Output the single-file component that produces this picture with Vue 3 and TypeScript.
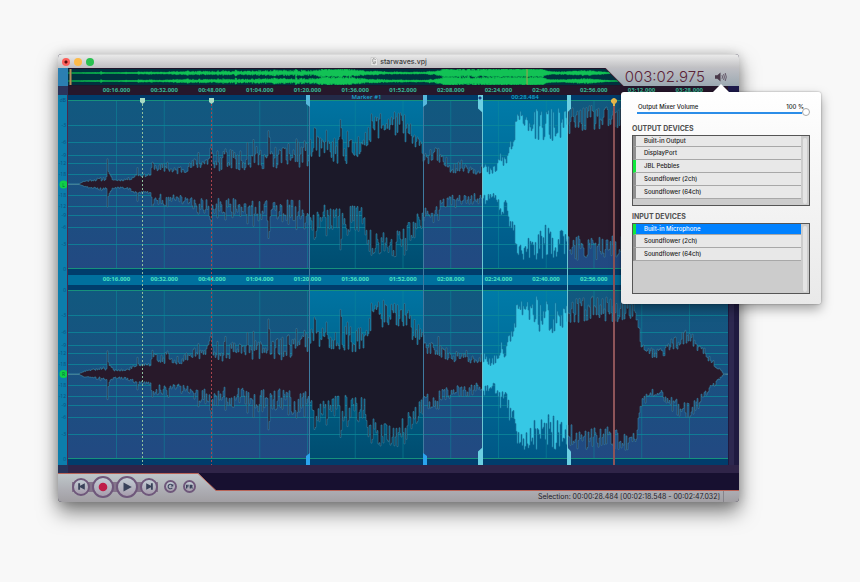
<script setup lang="ts">
import { ref } from 'vue'

type Point = [number, number, number]

const DURATION_WIDTH = 660
const CENTER = 84

/* Amplitude envelope: position, quiet level, peak level */
const envelope: Point[] = [
  [10, 0, 0], [15, 2, 3], [24, 3, 5], [34, 3, 7], [38, 4, 8], [39, 12, 15], [42, 6, 9], [45, 3, 5],
  [53, 3, 5], [62, 4, 7], [69, 8, 11], [74, 7, 10], [82, 8, 11], [84, 16, 22], [92, 10, 20],
  [100, 11, 24], [104, 9, 16], [112, 10, 20], [122, 13, 22], [130, 15, 31], [137, 14, 30],
  [143, 20, 38], [148, 12, 24], [157, 13, 36], [164, 14, 34], [175, 14, 33], [188, 15, 38],
  [207, 15, 38], [214, 14, 36], [227, 16, 42], [240, 17, 42], [244, 24, 48], [260, 20, 48],
  [280, 20, 48], [296, 24, 48], [301, 42, 70], [312, 46, 74], [322, 50, 74], [335, 44, 72],
  [344, 34, 58], [352, 25, 48], [358, 20, 36], [366, 20, 40], [372, 16, 30], [384, 11, 24],
  [400, 11, 24], [408, 9, 18], [414, 12, 24], [422, 8, 16], [427, 10, 20], [432, 18, 34],
  [438, 16, 28], [441, 28, 48], [445, 32, 50], [448, 54, 70], [455, 60, 76], [466, 44, 74],
  [480, 40, 77], [492, 44, 76], [500, 50, 76], [512, 52, 77], [524, 54, 79], [540, 52, 77],
  [555, 52, 77], [567, 58, 76], [569, 45, 60], [573, 26, 38], [579, 17, 26], [587, 14, 26],
  [594, 15, 27], [602, 21, 36], [612, 26, 44], [622, 29, 50], [632, 20, 34], [642, 11, 18],
  [650, 4, 7], [655, 0, 1], [660, 0, 0],
]

const peaks: Record<number, number> = {
  39: 26, 69: 18, 84: 24, 99: 24, 130: 33, 142: 38, 143: 42, 149: 34, 157: 38, 164: 34, 179: 42, 185: 45,
  200: 56, 201: 48, 214: 38, 220: 42, 228: 47, 236: 46, 246: 58, 247: 56, 258: 54, 266: 36,
  272: 66, 273: 58, 279: 54, 290: 48, 297: 42, 303: 72, 304: 66, 326: 73, 336: 72, 370: 38, 449: 72,
  468: 78, 479: 72,
}

const overviewPeakScale = 0.055

function levelAt(x: number): [number, number] {
  for (let i = 1; i < envelope.length; i++) {
    const a = envelope[i - 1]
    const b = envelope[i]
    if (x <= b[0]) {
      const t = Math.max(0, (x - a[0]) / (b[0] - a[0]))
      return [a[1] + (b[1] - a[1]) * t, a[2] + (b[2] - a[2]) * t]
    }
  }
  return [0, 0]
}

function createNoise(seed: number) {
  let state = seed
  return () => {
    state = (state * 1664525 + 1013904223) % 4294967296
    return state / 4294967296
  }
}

function halfWave(seed: number): number[] {
  const noise = createNoise(seed)
  const values: number[] = []
  for (let x = 0; x < DURATION_WIDTH; x++) {
    const [low, high] = levelAt(x)
    const value = low + (high - low) * Math.pow(noise(), 1.1)
    values.push(x in peaks ? Math.max(value, peaks[x] - noise() * 3) : value)
  }
  return values
}

function wavePath(upper: number[], lower: number[], center: number, sx = 1, sy = 1): string {
  let d = `M0 ${center}`
  upper.forEach((v, x) => {
    const y = (center - v * sy).toFixed(1)
    d += `L${(x * sx).toFixed(1)} ${y}H${((x + 1) * sx).toFixed(1)}`
  })
  for (let x = lower.length - 1; x >= 0; x--) {
    const y = (center + lower[x] * sy).toFixed(1)
    d += `L${((x + 1) * sx).toFixed(1)} ${y}H${(x * sx).toFixed(1)}`
  }
  return d + 'Z'
}

const halves = [halfWave(11), halfWave(57), halfWave(203), halfWave(419)]
const channels = [
  { id: 'left', path: wavePath(halves[0], halves[1], CENTER) },
  { id: 'right', path: wavePath(halves[2], halves[3], CENTER) },
]
const overviewPaths = [
  wavePath(halves[0], halves[1], 5, 0.835, overviewPeakScale),
  wavePath(halves[2], halves[3], 13, 0.835, overviewPeakScale),
]

const levelLines = [25, 42, 55, 63, 74, 95, 106, 115, 127, 144]
const gridLines = Array.from({ length: 13 }, (_, i) => 48.5 + i * 47.75)

const pad = (n: number) => String(n).padStart(2, '0')
const timeLabels = Array.from({ length: 13 }, (_, i) => {
  const s = (i + 1) * 16
  return `${pad(Math.floor(s / 60))}:${pad(s % 60)}.000`
})

const scaleTexts = ['-3', '-6', '-9', '-12', '-18', '-18', '-12', '-9', '-6', '-3']
const scaleMarks = [5, 195].flatMap((top, c) => [
  { y: top, text: c === 0 ? 'dB' : '0' },
  ...levelLines.map((y, i) => ({ y: top + y, text: scaleTexts[i] })),
  { y: top + 169, text: '0' },
])

const percent = (n: number) => `${(n / DURATION_WIDTH) * 100}%`

const volume = ref(100)
const outputs = ['Built-in Output', 'DisplayPort', 'JBL Pebbles', 'Soundflower (2ch)', 'Soundflower (64ch)']
const inputs = ['Built-in Microphone', 'Soundflower (2ch)', 'Soundflower (64ch)']
const activeOutput = ref('JBL Pebbles')
const activeInput = ref('Built-in Microphone')
</script>

<template>
  <main class="desktop">
    <section class="window">
      <header class="titlebar">
        <div class="lights">
          <button class="light close" aria-label="Close"></button>
          <button class="light minimize" aria-label="Minimize"></button>
          <button class="light maximize" aria-label="Zoom"></button>
        </div>
        <h1 class="title">
          <svg class="doc" viewBox="0 0 8 9" aria-hidden="true">
            <path d="M1 .5H5.5L7.5 2.5V8.5H1Z" fill="#e9e9e9" stroke="#bbb" stroke-width=".5" />
            <path d="M5.7 3Q3-.2 2.7 3.3T5.4 4.5Q6 8 2.5 6.2" fill="none" stroke="#999" />
          </svg>
          <span>starwaves.vpj</span>
        </h1>
      </header>

      <div class="top">
        <div class="corner"></div>
        <div class="overview">
          <svg viewBox="0 0 554 18" preserveAspectRatio="none" aria-hidden="true">
            <path d="M4 5H554M4 13H554" stroke="#0a9f48" />
            <path v-for="d in overviewPaths" :key="d" :d="d" fill="#12c255" stroke="#12c255" stroke-width=".5" />
            <path d="M0 .5H554M0 17.5H554" stroke="#21142a" />
            <path d="M2.5 1V17" stroke="#b98b55" stroke-width="2" />
            <path d="M458.5 1V17" stroke="#a9a04a" />
          </svg>
        </div>
        <div class="clock">
          <time class="time">003:02.975</time>
          <button class="speaker" aria-label="Audio devices">
            <svg viewBox="0 0 12 10" aria-hidden="true">
              <path d="M0 3.2H2.3L5.5.5V9.5L2.3 6.8H0Z" fill="#4a3a4a" />
              <path d="M7 3.2Q8 5 7 6.8M8.6 2Q10.2 5 8.6 8M10.2 1Q12.4 5 10.2 9" fill="none" stroke="#5c4e60" stroke-width=".9" />
            </svg>
          </button>
        </div>
      </div>

      <div class="ruler-row">
        <div class="ruler-corner"></div>
        <div class="ruler dark"><span v-for="t in timeLabels" :key="t">{{ t }}</span></div>
        <div class="ruler-end"></div>
      </div>

      <div class="editor">
        <svg class="scale" viewBox="0 0 10 370" preserveAspectRatio="none" aria-label="Level scale">
          <text v-for="(m, i) in scaleMarks" :key="i" x="8" :y="m.y + 2" text-anchor="end">{{ m.text }}</text>
          <circle cx="5.5" cy="89.5" r="4" fill="#10cf48" />
          <circle cx="5.5" cy="279" r="4" fill="#10cf48" />
          <text class="channel-name" x="5.5" y="91.5" text-anchor="middle">L</text>
          <text class="channel-name" x="5.5" y="281" text-anchor="middle">R</text>
          <path d="M9.5 0V370" stroke="#4a2a4c" />
        </svg>

        <div class="tracks">
          <template v-for="(ch, n) in channels" :key="ch.id">
            <div v-if="n === 1" class="ruler blue"><span v-for="t in timeLabels" :key="t">{{ t }}</span></div>
            <svg :class="['channel', ch.id]" viewBox="0 0 660 169" preserveAspectRatio="none" aria-hidden="true">
              <defs>
                <linearGradient :id="`bg-${ch.id}`" x1="0" y1="0" x2="0" y2="1">
                  <stop offset="0" stop-color="#11597f" /><stop offset="1" stop-color="#224982" />
                </linearGradient>
                <linearGradient :id="`marker-${ch.id}`" x1="0" y1="0" x2="0" y2="1">
                  <stop offset="0" stop-color="#0074a2" /><stop offset="1" stop-color="#004d70" />
                </linearGradient>
                <linearGradient :id="`select-${ch.id}`" x1="0" y1="0" x2="0" y2="1">
                  <stop offset="0" stop-color="#007ba8" /><stop offset="1" stop-color="#005886" />
                </linearGradient>
                <linearGradient :id="`fill-${ch.id}`" gradientUnits="userSpaceOnUse" x1="0" y1="0" x2="660" y2="0">
                  <stop offset="0" stop-color="#28192a" /><stop offset=".3644" stop-color="#28192a" />
                  <stop offset=".3644" stop-color="#1b1929" /><stop offset=".5394" stop-color="#1b1929" />
                  <stop offset=".5394" stop-color="#28192a" /><stop offset=".6288" stop-color="#28192a" />
                  <stop offset=".6288" stop-color="#36c8e5" /><stop offset=".7576" stop-color="#36c8e5" />
                  <stop offset=".7576" stop-color="#28192a" /><stop offset="1" stop-color="#28192a" />
                </linearGradient>
                <linearGradient :id="`edge-${ch.id}`" gradientUnits="userSpaceOnUse" x1="0" y1="0" x2="660" y2="0">
                  <stop offset="0" stop-color="#36809f" /><stop offset=".6288" stop-color="#36809f" />
                  <stop offset=".6288" stop-color="#1c7299" /><stop offset=".7576" stop-color="#1c7299" />
                  <stop offset=".7576" stop-color="#36809f" /><stop offset="1" stop-color="#36809f" />
                </linearGradient>
              </defs>
              <rect width="660" height="169" :fill="`url(#bg-${ch.id})`" />
              <rect x="241" width="115" height="169" :fill="`url(#marker-${ch.id})`" />
              <rect x="415" width="85" height="169" :fill="`url(#select-${ch.id})`" />
              <path v-for="y in levelLines" :key="y" :d="`M0 ${y + 0.5}H660`" stroke="#0c8b9b" stroke-opacity=".75" />
              <path v-for="x in gridLines" :key="x" :d="`M${x} 0V169`" stroke="#0c8b9b" stroke-opacity=".5" />
              <path d="M0 .5H660M0 168.5H660" stroke="#17917c" />
              <path d="M0 84.5H660" stroke="#4b7f8e" />
              <path :d="ch.path" :fill="`url(#fill-${ch.id})`" :stroke="`url(#edge-${ch.id})`" stroke-width=".6" />
            </svg>
          </template>

          <div class="region marker" :style="{ left: percent(241), width: percent(115) }">
            <span class="caption">Marker #1</span>
            <i class="handle top start"></i><i class="handle top end"></i>
            <i class="handle bottom start"></i><i class="handle bottom end"></i>
          </div>
          <div class="region selection" :style="{ left: percent(414), width: percent(86) }">
            <span class="caption">00:28.484</span>
            <i class="handle top start"></i><i class="handle top end"></i>
            <i class="handle bottom start"></i><i class="handle bottom end"></i>
          </div>
          <div class="flag cream" :style="{ left: percent(74) }">
            <svg viewBox="0 0 5 6" aria-hidden="true"><path d="M0 0H5V4L2.5 6L0 4Z" fill="#a9dcc4" /></svg>
          </div>
          <div class="flag red" :style="{ left: percent(143) }">
            <svg viewBox="0 0 5 6" aria-hidden="true"><path d="M0 0H5V4L2.5 6L0 4Z" fill="#a9dcc4" /></svg>
          </div>
          <div class="playhead" :style="{ left: percent(545) }">
            <svg viewBox="0 0 6 8" aria-hidden="true">
              <path d="M1 1Q3-1 5 1L6 2V4L4 6V8H2V6L0 4V2Z" fill="#e9bb4c" />
            </svg>
          </div>
        </div>
        <div class="scrollbar"></div>
      </div>

      <div class="hscroll"></div>

      <footer class="footer">
        <svg class="panel" viewBox="0 0 681 29" preserveAspectRatio="none" aria-hidden="true">
          <defs>
            <linearGradient id="panel-fill" x1="0" y1="0" x2="0" y2="1">
              <stop offset="0" stop-color="#bfc8cb" /><stop offset=".6" stop-color="#adadb3" /><stop offset="1" stop-color="#a19fa3" />
            </linearGradient>
          </defs>
          <path d="M0 0H140L158 17.5H681V29H0Z" fill="url(#panel-fill)" />
          <path d="M0 .5H140L158 17.5H681" fill="none" stroke="#b96457" />
        </svg>
        <div class="transport">
          <div class="main-buttons">
            <button class="round small" aria-label="Go to start">
              <svg viewBox="0 0 10 10"><path d="M2 2H3.7V4.4L8 2V8L3.7 5.6V8H2Z" /></svg>
            </button>
            <button class="round large" aria-label="Record">
              <svg viewBox="0 0 10 10"><circle cx="5" cy="5" r="4.3" fill="#bf1e48" /></svg>
            </button>
            <button class="round large" aria-label="Play">
              <svg viewBox="0 0 10 10"><path d="M1.5 .5L9.8 5L1.5 9.5Z" /></svg>
            </button>
            <button class="round small" aria-label="Go to end">
              <svg viewBox="0 0 10 10"><path d="M8 2H6.3V4.4L2 2V8L6.3 5.6V8H8Z" /></svg>
            </button>
          </div>
          <button class="round tiny" aria-label="Loop">
            <svg viewBox="0 0 10 10"><path d="M7.6 6.7A3.2 3.2 0 1 1 7.3 3" fill="none" stroke="#3d4760" stroke-width="1.6" /><path d="M9 1V5H5Z" /></svg>
          </button>
          <button class="round tiny" aria-label="Follow">
            <svg viewBox="0 0 10 10"><path d="M0 2.5H4V4H1.8V4.7H3.6V6H1.8V7.8H0ZM5.2 2.5H8.2Q9.8 2.8 9.6 4.2L8.8 5.4L10 7.8H8.2L7.3 6V7.8H5.2Z" /></svg>
          </button>
        </div>
        <div class="status">
          <output>Selection: 00:00:28.484 [00:02:18.548 - 00:02:47.032]</output>
        </div>
      </footer>
    </section>

    <aside class="popover">
      <div class="volume">
        <div class="volume-text">
          <label for="volume">Output Mixer Volume</label>
          <output for="volume">{{ volume }} %</output>
        </div>
        <input id="volume" v-model="volume" type="range" min="0" max="100" />
      </div>
      <h2>OUTPUT DEVICES</h2>
      <ul class="devices">
        <li v-for="d in outputs" :key="d" :class="{ active: d === activeOutput }">
          <button @click="activeOutput = d">{{ d }}</button>
        </li>
      </ul>
      <h2>INPUT DEVICES</h2>
      <ul class="devices">
        <li v-for="d in inputs" :key="d" :class="{ active: d === activeInput, selected: d === activeInput }">
          <button @click="activeInput = d">{{ d }}</button>
        </li>
      </ul>
    </aside>
  </main>
</template>

<style>
body {
  background: #f8f8f8;
}
</style>

<style scoped>
* {
  box-sizing: border-box;
}
.desktop {
  position: relative;
  padding: 54px 121px 80px 58px;
  font-family: Inter, "Liberation Sans", sans-serif;
}
button {
  border: 0;
  padding: 0;
  margin: 0;
  background: none;
  font: inherit;
}
svg {
  display: block;
}
.window {
  border-radius: 4px;
  overflow: hidden;
  background: #171030;
  box-shadow: 0 10px 20px rgba(0, 0, 0, 0.5), 0 0 12px rgba(0, 0, 0, 0.18);
}
.titlebar {
  display: grid;
  grid-template-columns: 1fr auto 1fr;
  align-items: center;
  height: 14px;
  padding: 0 4px;
  border-top: 1px solid #dadada;
  background: linear-gradient(#e9e9e9, #bfbfc2);
}
.lights {
  display: flex;
  gap: 4px;
}
.light {
  width: 8px;
  height: 8px;
  border-radius: 50%;
}
.close {
  background: radial-gradient(circle, #5a0b0b 0 1px, #fc5f5a 2px);
}
.minimize {
  background: #fcbb4a;
}
.maximize {
  background: #28c150;
}
.title {
  display: flex;
  align-items: center;
  gap: 2px;
  margin: 0;
  font-size: 7px;
  line-height: 10px;
  font-weight: 500;
  color: #3d3d3d;
}
.doc {
  width: 8px;
  height: 9px;
}
.top {
  display: flex;
  height: 18px;
}
.corner {
  flex: 0 0 10px;
  background: #2b7fb1;
}
.overview {
  flex: 1;
  min-width: 0;
  background: #00323f;
}
.overview svg {
  width: 100%;
  height: 18px;
}
.clock {
  position: relative;
  flex: none;
  display: flex;
  align-items: center;
  gap: 10px;
  margin-left: -18px;
  padding: 0 12px 0 20px;
  background: #4d2436;
  clip-path: polygon(0 0, 100% 0, 100% 100%, 18px 100%);
}
.clock::before {
  content: "";
  position: absolute;
  inset: 0 0 0 1px;
  background: linear-gradient(#bfbfc4, #9ca9b2);
  clip-path: polygon(0 0, 100% 0, 100% 100%, 18px 100%);
}
.time {
  position: relative;
  font-size: 15px;
  font-weight: 300;
  line-height: 18px;
  color: #5b2337;
}
.speaker {
  position: relative;
}
.speaker svg {
  width: 12px;
  height: 10px;
}
.ruler-row {
  display: grid;
  grid-template-columns: 10px 1fr 11px;
  height: 9px;
}
.ruler-corner {
  background: #2b345c;
}
.ruler-end {
  background: #1d1a4c;
}
.ruler {
  display: grid;
  grid-template-columns: repeat(13, 7.515%);
  padding-left: 3.73%;
  font-family: "Open Sans", sans-serif;
  font-size: 6px;
  font-weight: 700;
  line-height: 9px;
  text-align: center;
}
.dark {
  background: #26172b;
  color: #36b795;
}
.blue {
  height: 10px;
  margin: 6px 0 5px;
  background: #00709e;
  color: #4be0c0;
}
.editor {
  display: grid;
  grid-template-columns: 10px 1fr 11px;
}
.scale {
  width: 10px;
  height: 370px;
  background: #0c7eac;
  font-family: "Open Sans", sans-serif;
  font-size: 5px;
  fill: #0a4f7c;
}
.channel-name {
  fill: #056a3a;
}
.tracks {
  position: relative;
  min-width: 0;
  padding: 5px 0 6px;
  background: #003d6c;
}
.channel {
  width: 100%;
  height: 169px;
}
.scrollbar {
  border: solid #1f1a40;
  border-width: 0 5px 0 1px;
  background: #2d2850;
}
.hscroll {
  height: 8px;
  border-left: 10px solid #27335a;
  background: #2f2448;
}
.region {
  position: absolute;
  top: 0;
  bottom: 0;
  border: solid #3f7a9f;
  border-width: 0 1px;
  text-align: center;
}
.selection {
  border-color: #6ec6d2;
}
.caption {
  display: block;
  height: 5px;
  background: #232a48;
  font-family: "Open Sans", sans-serif;
  font-size: 6px;
  font-weight: 600;
  line-height: 5px;
  color: #19a5cf;
}
.selection .caption {
  background: #003358;
}
.handle {
  position: absolute;
  width: 4px;
  height: 12px;
  background: #56b8dc;
}
.top.handle {
  top: 0;
  height: 12px;
}
.bottom.handle {
  bottom: 0;
  background: #2ba4ee;
}
.start {
  right: 100%;
}
.end {
  left: 100%;
}
.top.start {
  clip-path: polygon(0 0, 100% 0, 100% 100%, 0 75%);
}
.top.end {
  clip-path: polygon(0 0, 100% 0, 100% 75%, 0 100%);
}
.bottom.start {
  clip-path: polygon(0 25%, 100% 0, 100% 100%, 0 100%);
}
.bottom.end {
  clip-path: polygon(0 0, 100% 25%, 100% 100%, 0 100%);
}
.selection .handle {
  height: 18px;
  background: #6bd0e2;
}
.selection .start {
  width: 5px;
}
.selection .top.start {
  background: radial-gradient(circle at 2px 3px, #203c80 0 1px, #6bd0e2 2px);
}
.flag {
  position: absolute;
  top: 9px;
  bottom: 0;
  width: 1px;
}
.cream {
  background: repeating-linear-gradient(#8fbf9c 0 2px, transparent 2px 4px);
}
.red {
  background: repeating-linear-gradient(#a8434c 0 2px, transparent 2px 4px);
}
.flag svg {
  position: absolute;
  left: -2px;
  top: -6px;
  width: 5px;
  height: 6px;
}
.playhead {
  position: absolute;
  top: 9px;
  bottom: 0;
  width: 2px;
  background: #8e5459;
}
.playhead svg {
  position: absolute;
  left: -2px;
  top: -6px;
  width: 6px;
  height: 8px;
}
.footer {
  position: relative;
  display: flex;
  justify-content: space-between;
  height: 29px;
}
.panel {
  position: absolute;
  inset: 0;
  width: 100%;
  height: 29px;
}
.transport {
  position: relative;
  display: flex;
  align-items: center;
  gap: 6px;
  padding: 0 0 2px 14px;
}
.main-buttons {
  display: flex;
  align-items: center;
  gap: 2px;
  background: linear-gradient(transparent 6px, #84748b 6px 16px, transparent 16px);
}
.round {
  display: grid;
  place-items: center;
  border: 2px solid #6f587b;
  border-radius: 50%;
  background: linear-gradient(#c2ccd4, #a79ead);
}
.round svg {
  fill: #39425a;
}
.small {
  width: 18px;
  height: 18px;
}
.small svg {
  width: 11px;
  height: 11px;
}
.large {
  width: 22px;
  height: 22px;
}
.large svg {
  width: 10px;
  height: 10px;
}
.tiny {
  width: 13px;
  height: 13px;
}
.tiny svg {
  width: 7px;
  height: 7px;
}
.status {
  position: relative;
  align-self: flex-end;
  height: 11px;
  margin-right: 15px;
  padding-right: 3px;
  border-right: 1px solid #85838a;
  font-size: 7px;
  line-height: 11px;
  color: #222028;
}
.popover {
  position: absolute;
  top: 92px;
  right: 39px;
  width: 200px;
  padding: 11px 11px 7px;
  border-radius: 3px;
  background: linear-gradient(#ffffff, #e9e9e9);
  box-shadow: 0 5px 12px rgba(0, 0, 0, 0.35), 0 0 2px rgba(0, 0, 0, 0.4);
  color: #222222;
}
.popover::before {
  content: "";
  position: absolute;
  right: 92px;
  top: -8px;
  width: 16px;
  height: 8px;
  background: #ffffff;
  clip-path: polygon(0 100%, 50% 0, 100% 100%);
}
.volume {
  margin: 0 0 5px 5px;
  font-size: 6px;
  font-weight: 500;
  line-height: 8px;
}
.volume-text {
  display: flex;
  justify-content: space-between;
  padding: 0 6px 0 1px;
}
#volume {
  appearance: none;
  display: block;
  width: 100%;
  height: 8px;
  margin: -3px 0 0;
  background: linear-gradient(#2b8de8, #2b8de8) 0 4px / 165px 2px no-repeat;
}
#volume::-webkit-slider-thumb {
  appearance: none;
  width: 8px;
  height: 8px;
  border: 1px solid #a8a8a8;
  border-radius: 50%;
  background: #ffffff;
}
h2 {
  height: 14px;
  margin: 0;
  font-size: 7px;
  line-height: 16px;
  font-weight: 700;
  color: #505050;
}
.devices {
  position: relative;
  height: 71px;
  margin: 0 0 3px;
  padding: 0 8px 0 0;
  border: 1px solid #555555;
  overflow: hidden;
  list-style: none;
  background: #cccccc;
}
.devices::after {
  content: "";
  position: absolute;
  right: 2px;
  top: 2px;
  bottom: 1px;
  width: 4px;
  border-radius: 2px;
  background: #e4e4e4;
}
.devices li {
  height: 13px;
  border-left: 3px solid #8f8f8f;
  border-bottom: 1px solid #a8a8a8;
  background: #e8e8e8;
}
.devices li:first-child {
  height: 11px;
}
.devices li.active {
  border-left-color: #10e83c;
}
.devices li.selected {
  background: #0081ff;
  color: #ffffff;
}
.devices button {
  display: block;
  width: 100%;
  height: 100%;
  padding-left: 8px;
  font-size: 6px;
  font-weight: 500;
  line-height: 10px;
  text-align: left;
  color: inherit;
}
</style>
